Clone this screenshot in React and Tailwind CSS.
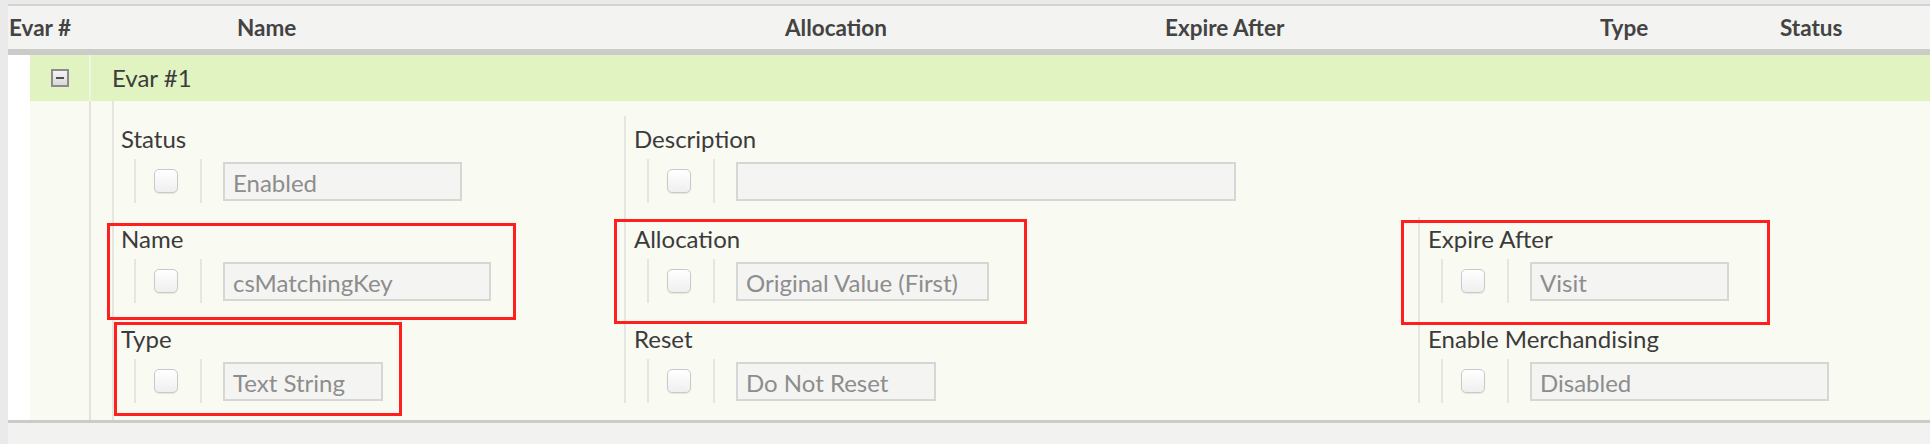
import React from "react";

const HEADERS = [
  { label: "Evar #", w: "w-[229px]", pad: "pl-[1px]" },
  { label: "Name", w: "w-[548px]", pad: "" },
  { label: "Allocation", w: "w-[380px]", pad: "" },
  { label: "Expire After", w: "w-[435px]", pad: "" },
  { label: "Type", w: "w-[180px]", pad: "" },
  { label: "Status", w: "flex-1", pad: "" },
];

const COLUMNS = [
  {
    cls: "w-[510px] pt-[23px] pl-[7px]",
    fields: [
      { label: "Status", value: "Enabled", w: "w-[239px]" },
      { label: "Name", value: "csMatchingKey", w: "w-[268px]" },
      { label: "Type", value: "Text String", w: "w-[160px]" },
    ],
  },
  {
    cls: "w-[794px] mt-[15px] pt-[8px] pl-[8px] border-l-2 border-[#e6e6e0]",
    fields: [
      { label: "Description", value: "", w: "w-[500px]" },
      { label: "Allocation", value: "Original Value (First)", w: "w-[253px]" },
      { label: "Reset", value: "Do Not Reset", w: "w-[200px]" },
    ],
  },
  {
    // no first-row field here, so the column rule starts lower
    cls: "w-[420px] mt-[116px] pt-[7px] pl-[8px] border-l-2 border-[#e6e6e0]",
    fields: [
      { label: "Expire After", value: "Visit", w: "w-[199px]" },
      { label: "Enable Merchandising", value: "Disabled", w: "w-[299px]" },
    ],
  },
];

// red annotation boxes drawn over the screenshot
const MARKS = [
  "left-[107px] top-[223px] w-[409px] h-[97px]",
  "left-[114px] top-[322px] w-[288px] h-[94px]",
  "left-[614px] top-[219px] w-[413px] h-[105px]",
  "left-[1401px] top-[220px] w-[369px] h-[105px]",
];

const Checkbox = () => (
  <div className="w-[24px] h-[24px] rounded-[5px] border border-[#c9c9c9] bg-linear-to-b from-white to-[#efefef] shadow-[0_1px_1px_rgba(0,0,0,0.08)]" />
);

const Field = ({ field }) => (
  <div className="h-[79px]">
    <div className="h-[30px] leading-[30px] text-[24px] text-[#3b3b3b] whitespace-nowrap">
      {field.label}
    </div>
    <div className="ml-[13px] mt-[5px] h-[44px] flex border-l-2 border-[#e6e6e0]">
      <div className="w-[64px] pl-[18px] flex items-center">
        <Checkbox />
      </div>
      <div className="pl-[21px] flex items-center border-l-2 border-[#e6e6e0]">
        <div
          className={`${field.w} h-[39px] border-2 border-[#d6d6d4] bg-[#f4f4f2] px-[8px] pt-[1px] text-[24px] leading-[35px] text-[#8d8d8d] whitespace-nowrap overflow-hidden`}
        >
          {field.value}
        </div>
      </div>
    </div>
  </div>
);

const App = () => {
  return (
    <div className="relative w-[1930px] h-[444px] overflow-hidden bg-[#eaeaea] font-['Lato','Noto_Sans',sans-serif]">
      <div className="pt-[4px] pl-[8px]">
        {/* header */}
        <div className="h-[51px] flex items-center bg-[#f3f3f1] border-t-2 border-[#d2d2d0] border-b-[6px] border-b-[#cbcbc7] text-[22.5px] font-bold text-[#434343]">
          {HEADERS.map((h) => (
            <div key={h.label} className={`${h.w} ${h.pad} whitespace-nowrap`}>
              {h.label}
            </div>
          ))}
        </div>

        <div className="flex">
          <div className="w-[22px] bg-white" />
          <div className="flex-1">
            {/* group row */}
            <div className="h-[46px] flex bg-[#e0f3c1]">
              <div className="w-[59px] flex items-center justify-center">
                <div className="w-[18px] h-[18px] border-2 border-[#8b8b8b] bg-linear-to-b from-[#f4f4f4] to-[#d9d9d9] flex items-center justify-center">
                  <div className="w-[8px] h-[2px] bg-[#505050]" />
                </div>
              </div>
              <div className="flex-1 flex items-center pl-[21px] border-l-2 border-[#eef6e2] text-[24px] text-[#3b3b3b]">
                Evar #1
              </div>
            </div>

            {/* detail panel */}
            <div className="h-[319px] flex items-start bg-[#f9faf2]">
              <div className="w-[59px] self-stretch" />
              <div className="w-[23px] self-stretch border-l-2 border-[#e3e3de]" />
              <div className="flex-1 self-stretch flex items-start border-l-2 border-[#e6e6e0]">
                {COLUMNS.map((col, i) => (
                  <div key={i} className={`${col.cls} flex flex-col gap-[21px]`}>
                    {col.fields.map((f, j) => (
                      <Field key={j} field={f} />
                    ))}
                  </div>
                ))}
              </div>
            </div>
          </div>
        </div>

        {/* footer strip */}
        <div className="h-[24px] bg-[#f2f2f1] border-t-[3px] border-[#cbcbc7]" />
      </div>

      {MARKS.map((m, i) => (
        <div key={i} className={`absolute ${m} border-[3px] border-[#fe1f1f]`} />
      ))}
    </div>
  );
};

export default App;
